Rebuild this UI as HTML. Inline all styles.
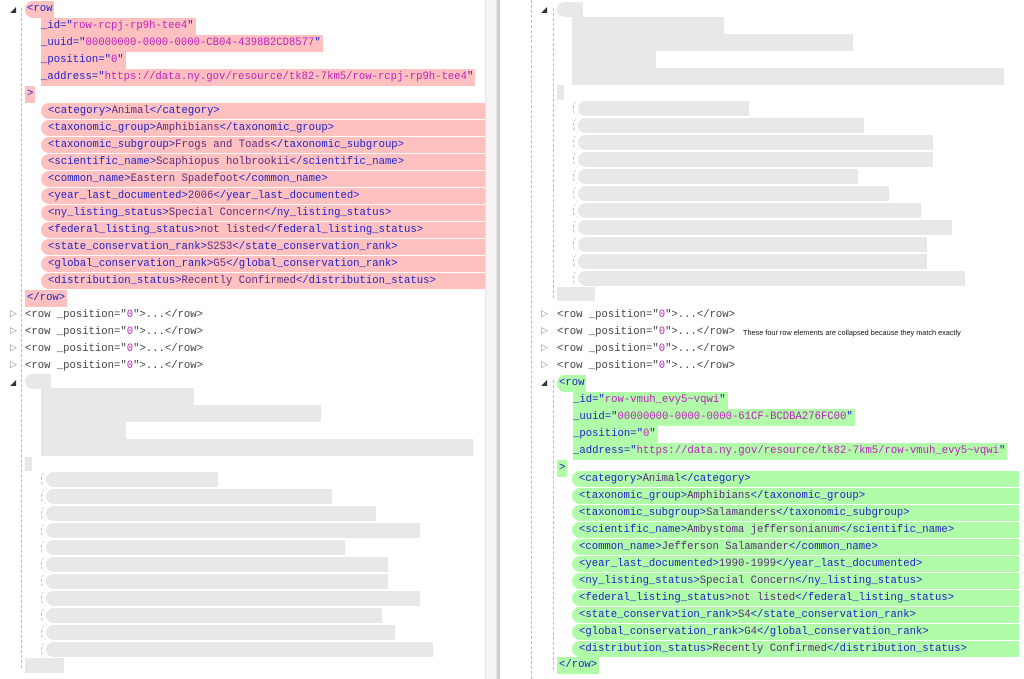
<!DOCTYPE html>
<html><head><meta charset="utf-8"><style>
*{margin:0;padding:0;box-sizing:border-box}
body{width:1024px;height:679px;overflow:hidden;background:#fff;position:relative;font-family:"Liberation Mono",monospace;font-size:10.6px}
.l{position:absolute;height:17px;line-height:17px;white-space:pre}
.t{color:#2020c8}.v{color:#c020c0}.c{color:#5c2c7c}.g{color:#444}
.pk{background:#ffc0c0}.gr{background:#b0fca8}
.ch{border-radius:8px 0 0 8px;height:16px;line-height:16px}
.gy{position:absolute;background:#e8e8e8}
.gc{position:absolute;background:#e8e8e8;height:15px;border-radius:8px 0 0 8px}
.par{position:absolute;width:6px;height:15px;border-left:1px dashed #bbb;border-radius:8px 0 0 8px}
.dl{position:absolute;width:0;border-left:1px dashed #bbb}
.tri{position:absolute;font-size:8px;color:#333;font-family:"DejaVu Sans",sans-serif;line-height:10px}
.tro{position:absolute;font-size:9px;color:#888;font-family:"DejaVu Sans",sans-serif;line-height:10px}
</style></head><body>
<div style="position:absolute;left:485px;top:0;width:12px;height:679px;background:#f5f5f5;border-left:1px solid #e4e4e4;border-right:1px solid #e4e4e4"></div>
<div style="position:absolute;left:497px;top:0;width:3px;height:679px;background:#d0d0d0"></div>
<div class="dl" style="left:21px;top:8px;height:660px"></div>
<div class="dl" style="left:531px;top:0;height:679px"></div>
<div class="dl" style="left:553px;top:8px;height:290px"></div>
<div class="dl" style="left:553px;top:380px;height:290px"></div>

<div class="tri" style="left:10px;top:5px">◢</div>
<div class="l t pk" style="left:25px;top:1px;padding:0 2px;border-radius:8px 0 0 8px">&lt;row</div>
<div class="l t pk" style="left:41px;top:18px;padding-right:2px">_id="<span class="v">row-rcpj-rp9h-tee4</span>"</div>
<div class="l t pk" style="left:41px;top:35px;padding-right:2px">_uuid="<span class="v">00000000-0000-0000-CB04-4398B2CD8577</span>"</div>
<div class="l t pk" style="left:41px;top:52px;padding-right:2px">_position="<span class="v">0</span>"</div>
<div class="l t pk" style="left:41px;top:69px;padding-right:2px">_address="<span class="v">https://data.ny.gov/resource/tk82-7km5/row-rcpj-rp9h-tee4</span>"</div>
<div class="l t pk" style="left:25px;top:86px;padding:0 2px">&gt;</div>
<div class="l pk ch" style="left:41px;top:103px;width:444px;padding-left:7px"><span class="t">&lt;category&gt;</span><span class="c">Animal</span><span class="t">&lt;/category&gt;</span></div>
<div class="l pk ch" style="left:41px;top:120px;width:444px;padding-left:7px"><span class="t">&lt;taxonomic_group&gt;</span><span class="c">Amphibians</span><span class="t">&lt;/taxonomic_group&gt;</span></div>
<div class="l pk ch" style="left:41px;top:137px;width:444px;padding-left:7px"><span class="t">&lt;taxonomic_subgroup&gt;</span><span class="c">Frogs and Toads</span><span class="t">&lt;/taxonomic_subgroup&gt;</span></div>
<div class="l pk ch" style="left:41px;top:154px;width:444px;padding-left:7px"><span class="t">&lt;scientific_name&gt;</span><span class="c">Scaphiopus holbrookii</span><span class="t">&lt;/scientific_name&gt;</span></div>
<div class="l pk ch" style="left:41px;top:171px;width:444px;padding-left:7px"><span class="t">&lt;common_name&gt;</span><span class="c">Eastern Spadefoot</span><span class="t">&lt;/common_name&gt;</span></div>
<div class="l pk ch" style="left:41px;top:188px;width:444px;padding-left:7px"><span class="t">&lt;year_last_documented&gt;</span><span class="c">2006</span><span class="t">&lt;/year_last_documented&gt;</span></div>
<div class="l pk ch" style="left:41px;top:205px;width:444px;padding-left:7px"><span class="t">&lt;ny_listing_status&gt;</span><span class="c">Special Concern</span><span class="t">&lt;/ny_listing_status&gt;</span></div>
<div class="l pk ch" style="left:41px;top:222px;width:444px;padding-left:7px"><span class="t">&lt;federal_listing_status&gt;</span><span class="c">not listed</span><span class="t">&lt;/federal_listing_status&gt;</span></div>
<div class="l pk ch" style="left:41px;top:239px;width:444px;padding-left:7px"><span class="t">&lt;state_conservation_rank&gt;</span><span class="c">S2S3</span><span class="t">&lt;/state_conservation_rank&gt;</span></div>
<div class="l pk ch" style="left:41px;top:256px;width:444px;padding-left:7px"><span class="t">&lt;global_conservation_rank&gt;</span><span class="c">G5</span><span class="t">&lt;/global_conservation_rank&gt;</span></div>
<div class="l pk ch" style="left:41px;top:273px;width:444px;padding-left:7px"><span class="t">&lt;distribution_status&gt;</span><span class="c">Recently Confirmed</span><span class="t">&lt;/distribution_status&gt;</span></div>
<div class="l t pk" style="left:25px;top:290px;padding:0 2px">&lt;/row&gt;</div>

<div class="tro" style="left:10px;top:309px">▷</div><div class="l g" style="left:25px;top:307px">&lt;row _position="<span class="v">0</span>"&gt;...&lt;/row&gt;</div>
<div class="tro" style="left:10px;top:326px">▷</div><div class="l g" style="left:25px;top:324px">&lt;row _position="<span class="v">0</span>"&gt;...&lt;/row&gt;</div>
<div class="tro" style="left:10px;top:343px">▷</div><div class="l g" style="left:25px;top:341px">&lt;row _position="<span class="v">0</span>"&gt;...&lt;/row&gt;</div>
<div class="tro" style="left:10px;top:360px">▷</div><div class="l g" style="left:25px;top:358px">&lt;row _position="<span class="v">0</span>"&gt;...&lt;/row&gt;</div>

<div class="tri" style="left:10px;top:378px">◢</div>
<div class="gy" style="left:25px;top:374px;width:26px;height:15px;border-radius:8px 0 0 8px"></div>
<div class="gy" style="left:41px;top:388px;width:153px;height:17px"></div>
<div class="gy" style="left:41px;top:405px;width:280px;height:17px"></div>
<div class="gy" style="left:41px;top:422px;width:85px;height:17px"></div>
<div class="gy" style="left:41px;top:439px;width:432px;height:17px"></div>
<div class="gy" style="left:25px;top:457px;width:7px;height:14px"></div>
<div class="par" style="left:41px;top:472px"></div><div class="gc" style="left:46px;top:472px;width:172px"></div>
<div class="par" style="left:41px;top:489px"></div><div class="gc" style="left:46px;top:489px;width:286px"></div>
<div class="par" style="left:41px;top:506px"></div><div class="gc" style="left:46px;top:506px;width:330px"></div>
<div class="par" style="left:41px;top:523px"></div><div class="gc" style="left:46px;top:523px;width:374px"></div>
<div class="par" style="left:41px;top:540px"></div><div class="gc" style="left:46px;top:540px;width:299px"></div>
<div class="par" style="left:41px;top:557px"></div><div class="gc" style="left:46px;top:557px;width:342px"></div>
<div class="par" style="left:41px;top:574px"></div><div class="gc" style="left:46px;top:574px;width:342px"></div>
<div class="par" style="left:41px;top:591px"></div><div class="gc" style="left:46px;top:591px;width:374px"></div>
<div class="par" style="left:41px;top:608px"></div><div class="gc" style="left:46px;top:608px;width:336px"></div>
<div class="par" style="left:41px;top:625px"></div><div class="gc" style="left:46px;top:625px;width:349px"></div>
<div class="par" style="left:41px;top:642px"></div><div class="gc" style="left:46px;top:642px;width:387px"></div>
<div class="gy" style="left:25px;top:658px;width:39px;height:15px"></div>

<div class="tri" style="left:541px;top:5px">◢</div>
<div class="gy" style="left:557px;top:2px;width:26px;height:15px;border-radius:8px 0 0 8px"></div>
<div class="gy" style="left:572px;top:17px;width:152px;height:17px"></div>
<div class="gy" style="left:572px;top:34px;width:281px;height:17px"></div>
<div class="gy" style="left:572px;top:51px;width:84px;height:17px"></div>
<div class="gy" style="left:572px;top:68px;width:432px;height:17px"></div>
<div class="gy" style="left:557px;top:85px;width:7px;height:15px"></div>
<div class="par" style="left:573px;top:101px"></div><div class="gc" style="left:578px;top:101px;width:171px"></div>
<div class="par" style="left:573px;top:118px"></div><div class="gc" style="left:578px;top:118px;width:286px"></div>
<div class="par" style="left:573px;top:135px"></div><div class="gc" style="left:578px;top:135px;width:355px"></div>
<div class="par" style="left:573px;top:152px"></div><div class="gc" style="left:578px;top:152px;width:355px"></div>
<div class="par" style="left:573px;top:169px"></div><div class="gc" style="left:578px;top:169px;width:280px"></div>
<div class="par" style="left:573px;top:186px"></div><div class="gc" style="left:578px;top:186px;width:311px"></div>
<div class="par" style="left:573px;top:203px"></div><div class="gc" style="left:578px;top:203px;width:343px"></div>
<div class="par" style="left:573px;top:220px"></div><div class="gc" style="left:578px;top:220px;width:374px"></div>
<div class="par" style="left:573px;top:237px"></div><div class="gc" style="left:578px;top:237px;width:349px"></div>
<div class="par" style="left:573px;top:254px"></div><div class="gc" style="left:578px;top:254px;width:349px"></div>
<div class="par" style="left:573px;top:271px"></div><div class="gc" style="left:578px;top:271px;width:387px"></div>
<div class="gy" style="left:557px;top:287px;width:38px;height:14px"></div>

<div class="tro" style="left:541px;top:309px">▷</div><div class="l g" style="left:557px;top:307px">&lt;row _position="<span class="v">0</span>"&gt;...&lt;/row&gt;</div>
<div class="tro" style="left:541px;top:326px">▷</div><div class="l g" style="left:557px;top:324px">&lt;row _position="<span class="v">0</span>"&gt;...&lt;/row&gt;</div>
<div class="l" style="left:743px;top:324px;font-family:'Liberation Sans',sans-serif;font-size:7.3px;color:#111">These four row elements are collapsed because they match exactly</div>
<div class="tro" style="left:541px;top:343px">▷</div><div class="l g" style="left:557px;top:341px">&lt;row _position="<span class="v">0</span>"&gt;...&lt;/row&gt;</div>
<div class="tro" style="left:541px;top:360px">▷</div><div class="l g" style="left:557px;top:358px">&lt;row _position="<span class="v">0</span>"&gt;...&lt;/row&gt;</div>

<div class="tri" style="left:541px;top:378px">◢</div>
<div class="l t gr" style="left:557px;top:375px;padding:0 2px;border-radius:8px 0 0 8px">&lt;row</div>
<div class="l t gr" style="left:573px;top:392px;padding-right:2px">_id="<span class="v">row-vmuh_evy5~vqwi</span>"</div>
<div class="l t gr" style="left:573px;top:409px;padding-right:2px">_uuid="<span class="v">00000000-0000-0000-61CF-BCDBA276FC00</span>"</div>
<div class="l t gr" style="left:573px;top:426px;padding-right:2px">_position="<span class="v">0</span>"</div>
<div class="l t gr" style="left:573px;top:443px;padding-right:2px">_address="<span class="v">https://data.ny.gov/resource/tk82-7km5/row-vmuh_evy5~vqwi</span>"</div>
<div class="l t gr" style="left:557px;top:460px;padding:0 2px">&gt;</div>
<div class="l gr ch" style="left:572px;top:471px;width:447px;padding-left:7px"><span class="t">&lt;category&gt;</span><span class="c">Animal</span><span class="t">&lt;/category&gt;</span></div>
<div class="l gr ch" style="left:572px;top:488px;width:447px;padding-left:7px"><span class="t">&lt;taxonomic_group&gt;</span><span class="c">Amphibians</span><span class="t">&lt;/taxonomic_group&gt;</span></div>
<div class="l gr ch" style="left:572px;top:505px;width:447px;padding-left:7px"><span class="t">&lt;taxonomic_subgroup&gt;</span><span class="c">Salamanders</span><span class="t">&lt;/taxonomic_subgroup&gt;</span></div>
<div class="l gr ch" style="left:572px;top:522px;width:447px;padding-left:7px"><span class="t">&lt;scientific_name&gt;</span><span class="c">Ambystoma jeffersonianum</span><span class="t">&lt;/scientific_name&gt;</span></div>
<div class="l gr ch" style="left:572px;top:539px;width:447px;padding-left:7px"><span class="t">&lt;common_name&gt;</span><span class="c">Jefferson Salamander</span><span class="t">&lt;/common_name&gt;</span></div>
<div class="l gr ch" style="left:572px;top:556px;width:447px;padding-left:7px"><span class="t">&lt;year_last_documented&gt;</span><span class="c">1990-1999</span><span class="t">&lt;/year_last_documented&gt;</span></div>
<div class="l gr ch" style="left:572px;top:573px;width:447px;padding-left:7px"><span class="t">&lt;ny_listing_status&gt;</span><span class="c">Special Concern</span><span class="t">&lt;/ny_listing_status&gt;</span></div>
<div class="l gr ch" style="left:572px;top:590px;width:447px;padding-left:7px"><span class="t">&lt;federal_listing_status&gt;</span><span class="c">not listed</span><span class="t">&lt;/federal_listing_status&gt;</span></div>
<div class="l gr ch" style="left:572px;top:607px;width:447px;padding-left:7px"><span class="t">&lt;state_conservation_rank&gt;</span><span class="c">S4</span><span class="t">&lt;/state_conservation_rank&gt;</span></div>
<div class="l gr ch" style="left:572px;top:624px;width:447px;padding-left:7px"><span class="t">&lt;global_conservation_rank&gt;</span><span class="c">G4</span><span class="t">&lt;/global_conservation_rank&gt;</span></div>
<div class="l gr ch" style="left:572px;top:641px;width:447px;padding-left:7px"><span class="t">&lt;distribution_status&gt;</span><span class="c">Recently Confirmed</span><span class="t">&lt;/distribution_status&gt;</span></div>
<div class="l t gr" style="left:557px;top:657px;padding:0 2px">&lt;/row&gt;</div>
</body></html>
